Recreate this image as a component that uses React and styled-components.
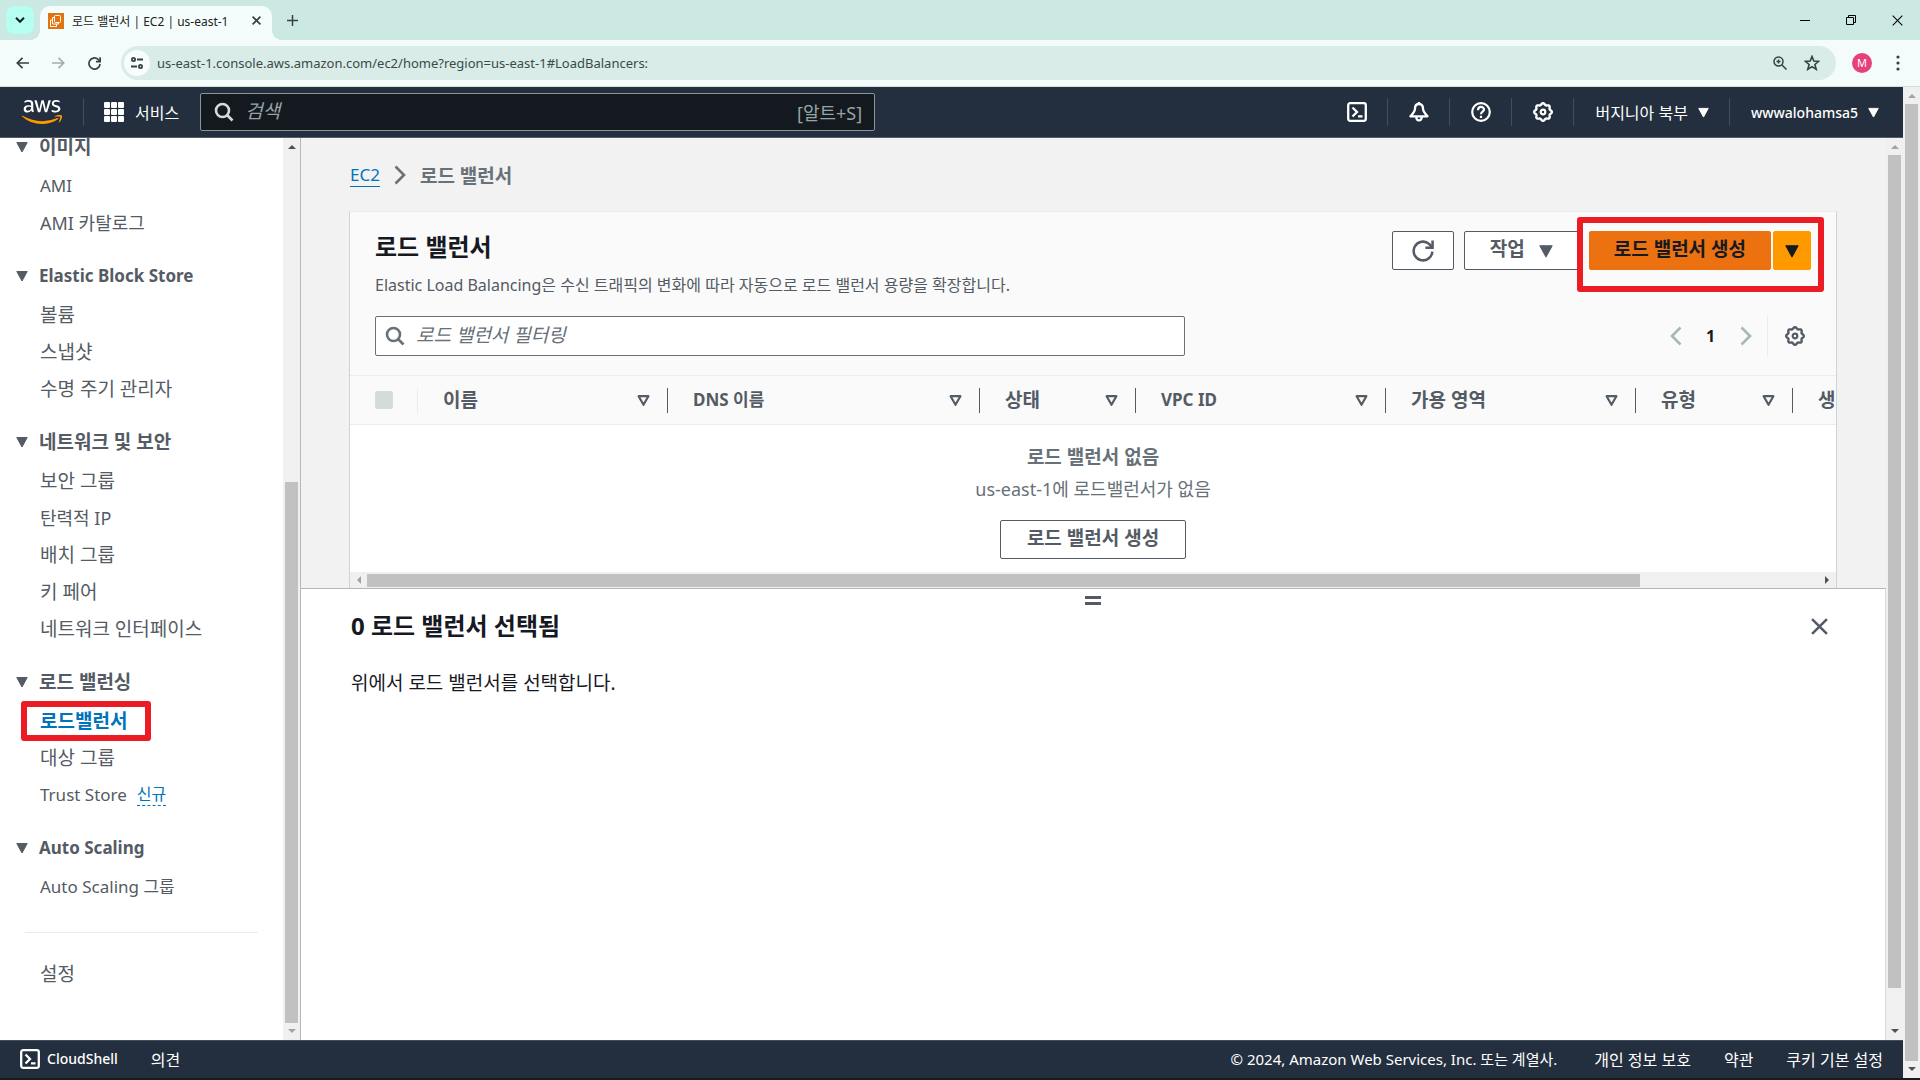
import React from "react";
import styled, { createGlobalStyle, css } from "styled-components";
import { FaAws } from "react-icons/fa";

const sans = `"Noto Sans", "Noto Sans CJK KR", sans-serif`;

const GlobalStyle = createGlobalStyle`
  *, *::before, *::after { box-sizing: border-box; }
  body { margin: 0; font-family: ${sans}; color: #16191f; overflow: hidden; }
  button, input { font-family: inherit; }
  button { cursor: pointer; }
  a { text-decoration: none; }
  svg { display: block; flex: none; }
`;

/* ============== data ============== */

const navGroups = [
  { title: "이미지", items: [{ text: "AMI", size: 17 }, { text: "AMI 카탈로그", size: 18 }] },
  {
    title: "Elastic Block Store",
    size: 17,
    items: [{ text: "볼륨" }, { text: "스냅샷" }, { text: "수명 주기 관리자" }],
  },
  {
    title: "네트워크 및 보안",
    items: [
      { text: "보안 그룹" },
      { text: "탄력적 IP", size: 18 },
      { text: "배치 그룹" },
      { text: "키 페어" },
      { text: "네트워크 인터페이스" },
    ],
  },
  {
    title: "로드 밸런싱",
    items: [
      { text: "로드밸런서", active: true },
      { text: "대상 그룹" },
      { text: "Trust Store", size: 17, badge: "신규" },
    ],
  },
  { title: "Auto Scaling", size: 17, items: [{ text: "Auto Scaling 그룹", size: 17 }] },
];

const columns = [
  { text: "이름", width: 250 },
  { text: "DNS 이름", width: 312, size: 17 },
  { text: "상태", width: 156 },
  { text: "VPC ID", width: 250, size: 17 },
  { text: "가용 영역", width: 250 },
  { text: "유형", width: 157 },
  { text: "생성 날짜", width: 250 },
];

/* ============== icons ============== */

const Caret = ({ size = 12 }) => (
  <svg width={size} height={size} viewBox="0 0 12 12" aria-hidden="true">
    <path d="M.800 1.500h10.400L6 11z" fill="currentColor" stroke="currentColor" strokeLinejoin="round" />
  </svg>
);

const SortCaret = () => (
  <svg width="13" height="13" viewBox="0 0 12 12" aria-hidden="true">
    <path d="M1.500 2h9L6 10z" fill="none" stroke="currentColor" strokeWidth="2" strokeLinejoin="round" />
  </svg>
);

const SearchIcon = ({ size = 20 }) => (
  <svg width={size} height={size} viewBox="0 0 20 20" fill="none" stroke="currentColor" strokeWidth="2.6" aria-hidden="true">
    <circle cx="8.5" cy="8.5" r="6.5" />
    <path d="M13 13l5.5 5.5" />
  </svg>
);

// ring with eight soft teeth
const gearPath = (() => {
  const pts = [];
  for (let i = 0; i < 160; i += 1) {
    const t = (i / 160) * Math.PI * 2;
    const r = 8 + 0.8 * Math.cos(8 * t);
    pts.push(`${(10 + r * Math.cos(t)).toFixed(2)} ${(10 + r * Math.sin(t)).toFixed(2)}`);
  }
  return `M${pts.join("L")}Z`;
})();

const GearIcon = () => (
  <svg width="20" height="20" viewBox="0 0 20 20" fill="none" stroke="currentColor" strokeWidth="2.4" aria-hidden="true">
    <path d={gearPath} />
    <circle cx="10" cy="10" r="2.300" strokeWidth="2.200" />
  </svg>
);

const ShellIcon = () => (
  <svg width="20" height="20" viewBox="0 0 20 20" fill="none" stroke="currentColor" strokeWidth="2.3" aria-hidden="true">
    <rect x="1.200" y="1.200" width="17.600" height="17.600" rx="2" />
    <path d="M5.500 5.500L10 10l-4.500 4.500M11 14.300h4.500" />
  </svg>
);

const BellIcon = () => (
  <svg width="20" height="20" viewBox="0 0 20 20" fill="none" stroke="currentColor" strokeWidth="2.3" strokeLinejoin="round" aria-hidden="true">
    <path d="M10 0v2" />
    <path d="M10 2c-2.800 0-4 2-4 4.500 0 3.200-1.500 4.700-4.500 7.800h17c-3-3.100-4.500-4.600-4.500-7.800C14 4 12.800 2 10 2z" />
    <path d="M7.300 14.500c0 5.200 5.400 5.200 5.400 0" />
  </svg>
);

const HelpIcon = () => (
  <svg width="20" height="20" viewBox="0 0 20 20" fill="none" stroke="currentColor" strokeWidth="2.2" aria-hidden="true">
    <circle cx="10" cy="10" r="8.800" />
    <path d="M7 8.200c0-4.200 6-4.200 6-.700 0 2.200-3 2.200-3 4.700M10 13.700v2.200" />
  </svg>
);

const AppsIcon = () => (
  <svg width="20" height="20" viewBox="0 0 20 20" fill="currentColor" aria-hidden="true">
    {[0, 7, 14].map((y) => [0, 7, 14].map((x) => <rect key={`${x}-${y}`} x={x} y={y} width="6" height="6" rx="1" />))}
  </svg>
);

const Chevron = ({ left, height = 20 }) => (
  <svg width="12" height={height} viewBox="0 0 12 20" fill="none" stroke="currentColor" strokeWidth="2.6" aria-hidden="true">
    <path d={left ? "M10.500 1.500L2 10l8.500 8.500" : "M1.500 1.500L10 10l-8.500 8.500"} />
  </svg>
);

const CloseIcon = ({ size, weight = 2 }) => (
  <svg width={size} height={size} viewBox="0 0 16 16" fill="none" stroke="currentColor" strokeWidth={weight} aria-hidden="true">
    <path d="M1 1l14 14M15 1L1 15" />
  </svg>
);

const RefreshIcon = ({ size = 22, weight = 2.3 }) => (
  <svg width={size} height={size} viewBox="0 0 20 20" fill="none" stroke="currentColor" strokeWidth={weight} aria-hidden="true">
    <path d="M18.500 10.500a8.500 8.500 0 1 1-3-7l2.700 3" />
    <path d="M18.700 .5v6.500h-6.500" />
  </svg>
);

/* ============== browser chrome ============== */

const Screen = styled.div`
  height: 100vh;
  display: flex;
  flex-direction: column;
  background: #202124;
  border-bottom: 2px solid #1b1b1e;
`;

const TabStrip = styled.div`
  height: 40px;
  flex: none;
  display: flex;
  align-items: center;
  padding-left: 6px;
  background: #cce8e2;
`;

const ChromeButton = styled.button`
  display: flex;
  align-items: center;
  justify-content: center;
  width: ${(p) => p.$w || 28}px;
  height: 28px;
  flex: none;
  padding: 0;
  border: 0;
  border-radius: 8px;
  background: ${(p) => p.$bg || "transparent"};
  color: ${(p) => p.$color || "#35423f"};
`;

const Tab = styled.div`
  position: relative;
  align-self: flex-end;
  display: flex;
  align-items: center;
  width: 232px;
  height: 34px;
  margin-left: 6px;
  padding: 0 8px 5px;
  border-radius: 10px 10px 0 0;
  background: #f4fdfb;
  font-size: 12px;
  color: #1c2322;

  &::before, &::after {
    content: "";
    position: absolute;
    bottom: 0;
    width: 10px;
    height: 10px;
  }
  &::before { left: -10px; background: radial-gradient(circle at 0 0, transparent 10px, #f4fdfb 10px); }
  &::after { right: -10px; background: radial-gradient(circle at 100% 0, transparent 10px, #f4fdfb 10px); }

  span { flex: 1; margin-left: 8px; white-space: nowrap; }
`;

const WindowButtons = styled.div`
  display: flex;
  margin-left: auto;
`;

const Toolbar = styled.div`
  height: 47px;
  flex: none;
  display: flex;
  align-items: center;
  gap: 8px;
  padding: 0 8px;
  background: #f3fcfa;
  border-bottom: 1px solid #d5dddd;
`;

const Omnibox = styled.div`
  flex: 1;
  display: flex;
  align-items: center;
  gap: 4px;
  height: 34px;
  padding: 0 10px 0 4px;
  margin: 0 0 0 5px;
  border-radius: 17px;
  background: #d9ece8;
`;

const SiteInfo = styled.button`
  display: flex;
  align-items: center;
  justify-content: center;
  width: 26px;
  height: 26px;
  flex: none;
  margin-left: -1px;
  padding: 0;
  border: 0;
  border-radius: 50%;
  background: #f6fdfc;
  color: #35423f;
`;

const Url = styled.input`
  flex: 1;
  min-width: 0;
  padding: 0 0 0 3px;
  border: 0;
  outline: 0;
  background: transparent;
  color: #3c4a48;
  font-size: 13px;
`;

const Avatar = styled.button`
  width: 20px;
  height: 20px;
  flex: none;
  margin: 0 4px 0 8px;
  padding: 0;
  border: 0;
  border-radius: 50%;
  background: #e8407a;
  color: #fff;
  font-size: 11px;
  line-height: 20px;
`;

function BrowserChrome() {
  return (
    <>
      <TabStrip>
        <ChromeButton $bg="#b5fef0" $color="#10201d" aria-label="탭 검색">
          <svg width="10" height="6" viewBox="0 0 10 6" fill="none" stroke="currentColor" strokeWidth="2">
            <path d="M1 .800l4 4 4-4" />
          </svg>
        </ChromeButton>
        <Tab>
          <svg width="16" height="16" viewBox="0 0 16 16" fill="none" stroke="#fff">
            <rect width="16" height="16" fill="#e2730f" stroke="none" />
            <rect x="6.500" y="2.500" width="6" height="7" rx="1" />
            <path d="M6.500 4.500h-2v6.500h6v-1.500M4.500 7H2.500v6.500h6V11" />
          </svg>
          <span>로드 밸런서 | EC2 | us-east-1</span>
          <ChromeButton $w={16} aria-label="탭 닫기"><CloseIcon size={9} weight={3} /></ChromeButton>
        </Tab>
        <ChromeButton $w={40} aria-label="새 탭">
          <svg width="11" height="11" viewBox="0 0 11 11" stroke="currentColor" strokeWidth="1.500">
            <path d="M5.500 0v11M0 5.500h11" />
          </svg>
        </ChromeButton>
        <WindowButtons>
          <ChromeButton $w={46} $color="#000" aria-label="최소화">
            <svg width="10" height="10" viewBox="0 0 10 10" stroke="currentColor"><path d="M0 5.500h10" /></svg>
          </ChromeButton>
          <ChromeButton $w={46} $color="#000" aria-label="이전 크기로 복원">
            <svg width="10" height="10" viewBox="0 0 10 10" fill="none" stroke="currentColor">
              <path d="M.5 2.500h7v7h-7zM2.500 2.500v-2h7v7h-2" />
            </svg>
          </ChromeButton>
          <ChromeButton $w={46} $color="#000" aria-label="닫기"><CloseIcon size={11} weight={1.5} /></ChromeButton>
        </WindowButtons>
      </TabStrip>
      <Toolbar>
        <ChromeButton aria-label="뒤로">
          <svg width="13" height="12" viewBox="0 0 13 12" fill="none" stroke="currentColor" strokeWidth="1.700">
            <path d="M13 6H1.500M6.500 .800L1.300 6l5.200 5.200" />
          </svg>
        </ChromeButton>
        <ChromeButton $color="#a4adab" aria-label="앞으로">
          <svg width="13" height="12" viewBox="0 0 13 12" fill="none" stroke="currentColor" strokeWidth="1.700">
            <path d="M0 6h11.500M6.500 .800L11.700 6l-5.200 5.200" />
          </svg>
        </ChromeButton>
        <ChromeButton aria-label="새로고침"><RefreshIcon size={13} weight={2.6} /></ChromeButton>
        <Omnibox>
          <SiteInfo aria-label="사이트 정보 보기">
            <svg width="12" height="12" viewBox="0 0 12 12" fill="none" stroke="currentColor" strokeWidth="1.800">
              <circle cx="2.500" cy="2.500" r="1.600" />
              <path d="M6 2.500h6M0 9.500h6" />
              <circle cx="9.500" cy="9.500" r="1.600" />
            </svg>
          </SiteInfo>
          <Url
            type="text"
            aria-label="주소창"
            defaultValue="us-east-1.console.aws.amazon.com/ec2/home?region=us-east-1#LoadBalancers:"
          />
          <ChromeButton aria-label="확대/축소">
            <svg width="14" height="14" viewBox="0 0 14 14" fill="none" stroke="currentColor" strokeWidth="1.500">
              <circle cx="5.500" cy="5.500" r="4.500" />
              <path d="M9 9l4.500 4.500M3.500 5.500h4M5.500 3.500v4" />
            </svg>
          </ChromeButton>
          <ChromeButton aria-label="북마크">
            <svg width="16" height="16" viewBox="0 0 16 16" fill="none" stroke="currentColor" strokeWidth="1.600">
              <path d="M8 1.500l1.800 4.600 4.900.300-3.800 3.100 1.300 4.800L8 11.600l-4.200 2.700 1.300-4.800L1.300 6.400l4.900-.300z" />
            </svg>
          </ChromeButton>
        </Omnibox>
        <Avatar aria-label="프로필">M</Avatar>
        <ChromeButton aria-label="메뉴">
          <svg width="4" height="16" viewBox="0 0 4 16" fill="currentColor">
            <circle cx="2" cy="2" r="1.600" />
            <circle cx="2" cy="8" r="1.600" />
            <circle cx="2" cy="14" r="1.600" />
          </svg>
        </ChromeButton>
      </Toolbar>
    </>
  );
}

/* ============== scroll bars ============== */

const Track = styled.div`
  flex: none;
  display: flex;
  flex-direction: ${(p) => (p.$horizontal ? "row" : "column")};
  align-items: center;
  background: #f0f0f0;
  color: #505050;
  ${(p) => (p.$horizontal ? "height: 16px;" : "width: 17px;")}

  svg { margin: ${(p) => (p.$horizontal ? "0 6px" : "6px 0")}; }
`;

const Thumb = styled.div`
  flex: ${(p) => p.$grow};
  background: #c1c1c1;
  ${(p) => (p.$horizontal ? "height: 13px;" : "width: 13px;")}
`;

const Rest = styled.div`
  flex: ${(p) => p.$grow};
`;

const arrows = { up: "M0 5l4-4 4 4z", down: "M0 0l4 4 4-4z", left: "M5 0L1 4l4 4z", right: "M0 0l4 4-4 4z" };

const Arrow = ({ dir, dim }) => {
  const vertical = dir === "up" || dir === "down";
  return (
    <svg width={vertical ? 8 : 5} height={vertical ? 5 : 8} fill={dim ? "#a3a3a3" : "currentColor"} aria-hidden="true">
      <path d={arrows[dir]} />
    </svg>
  );
};

function ScrollBar({ horizontal, before, thumb, after, dimStart, dimEnd }) {
  return (
    <Track $horizontal={horizontal}>
      <Arrow dir={horizontal ? "left" : "up"} dim={dimStart} />
      <Rest $grow={before} />
      <Thumb $horizontal={horizontal} $grow={thumb} />
      <Rest $grow={after} />
      <Arrow dir={horizontal ? "right" : "down"} dim={dimEnd} />
    </Track>
  );
}

/* ============== console header ============== */

const Viewport = styled.div`
  flex: 1;
  min-height: 0;
  display: flex;
`;

const Console = styled.div`
  flex: 1;
  min-width: 0;
  display: flex;
  flex-direction: column;
`;

const Header = styled.header`
  height: 51px;
  flex: none;
  display: flex;
  align-items: center;
  background: #232f3e;
  border-bottom: 1px solid #545b64;
  color: #fff;
`;

const Logo = styled.a`
  display: flex;
  align-items: center;
  width: 84px;
  height: 28px;
  padding-left: 22px;
  border-right: 1px solid #414d5c;

  path { fill: url(#aws-logo); }
`;

const Services = styled.button`
  display: flex;
  align-items: center;
  gap: 11px;
  padding: 0 21px 0 20px;
  border: 0;
  background: transparent;
  color: #fff;
  font-size: 16px;
`;

const HeaderSearch = styled.label`
  display: flex;
  align-items: center;
  gap: 10px;
  width: 675px;
  height: 38px;
  padding: 0 12px 0 13px;
  border: 1px solid #879596;
  border-radius: 2px;
  background: #14191f;
  color: #d5dbdb;

  input {
    flex: 1;
    min-width: 0;
    padding: 0 0 2px 1px;
    border: 0;
    outline: 0;
    background: transparent;
    color: #fff;
    font-size: 19px;
  }
  input::placeholder { color: #95a5a6; font-style: italic; opacity: 1; }
  kbd { font-family: inherit; font-size: 18px; color: #95a5a6; }
`;

const HeaderItems = styled.div`
  display: flex;
  margin-left: auto;
  padding-right: 4px;
`;

const HeaderItem = styled.button`
  display: flex;
  align-items: center;
  justify-content: center;
  gap: 10px;
  height: 28px;
  padding: 0 20px 0 21px;
  border: 0;
  background: transparent;
  color: #fff;
  font-size: ${(p) => p.$size || 16}px;
  font-weight: ${(p) => (p.$medium ? 500 : 400)};

  & + & { border-left: 1px solid #414d5c; }
`;

function ConsoleHeader() {
  return (
    <Header>
      <Logo href="#home" aria-label="aws">
        <svg width="0" height="0" aria-hidden="true">
          <linearGradient id="aws-logo" x1="0" y1="0" x2="0" y2="1">
            <stop offset="0.62" stopColor="#fff" />
            <stop offset="0.62" stopColor="#ff9900" />
          </linearGradient>
        </svg>
        <FaAws size={40} />
      </Logo>
      <Services>
        <AppsIcon />
        서비스
      </Services>
      <HeaderSearch>
        <SearchIcon />
        <input type="text" aria-label="검색" placeholder="검색" />
        <kbd>[알트+S]</kbd>
      </HeaderSearch>
      <HeaderItems>
        <HeaderItem aria-label="CloudShell"><ShellIcon /></HeaderItem>
        <HeaderItem aria-label="알림"><BellIcon /></HeaderItem>
        <HeaderItem aria-label="지원"><HelpIcon /></HeaderItem>
        <HeaderItem aria-label="설정"><GearIcon /></HeaderItem>
        <HeaderItem>버지니아 북부 <Caret size={11} /></HeaderItem>
        <HeaderItem $size={14} $medium>wwwalohamsa5 <Caret size={11} /></HeaderItem>
      </HeaderItems>
    </Header>
  );
}

/* ============== side navigation ============== */

const Body = styled.div`
  flex: 1;
  min-height: 0;
  display: flex;
`;

const Sidebar = styled.aside`
  flex: none;
  display: flex;
  width: 301px;
  background: #fff;
  border-right: 1px solid #b5b8b8;
`;

const NavScroll = styled.nav`
  flex: 1;
  overflow: hidden;

  > div:first-child { margin-top: -11px; }
`;

const NavGroup = styled.div`
  margin-bottom: 15px;
`;

const NavTitle = styled.button`
  display: flex;
  align-items: center;
  gap: 11px;
  height: 40px;
  padding: 0 0 0 16px;
  border: 0;
  background: transparent;
  color: #545b64;
  font-size: ${(p) => p.$size || 19}px;
  font-weight: 700;
  line-height: 24px;
`;

const NavList = styled.ul`
  margin: 0;
  padding: 0;
  list-style: none;
`;

const NavItem = styled.li`
  position: relative;
  display: flex;
  align-items: center;
  gap: 10px;
  height: 37px;
  padding-left: 40px;
  line-height: 24px;
`;

const NavLink = styled.a`
  color: ${(p) => (p.$active ? "#0073bb" : "#545b64")};
  font-size: ${(p) => p.$size || 19}px;
  font-weight: ${(p) => (p.$active ? 700 : 400)};
`;

const NewBadge = styled.a`
  color: #0073bb;
  font-size: 16px;
  line-height: 22px;
  border-bottom: 1px dashed #0073bb;
`;

const Divider = styled.hr`
  margin: 27px 25px 22px;
  border: 0;
  border-top: 1px solid #eaeded;
`;

// red frame drawn over the element it calls out
const Highlight = styled.div`
  position: absolute;
  border: 6px solid #ec1c24;
  border-radius: 3px;
  pointer-events: none;
  ${(p) =>
    p.$nav
      ? css`top: -1px; left: 21px; width: 130px; height: 40px;`
      : css`inset: -14px -13px -22px -12px;`}
`;

function SideNav() {
  return (
    <Sidebar>
      <NavScroll>
        {navGroups.map((group) => (
          <NavGroup key={group.title}>
            <NavTitle $size={group.size} aria-expanded="true">
              <Caret />
              {group.title}
            </NavTitle>
            <NavList>
              {group.items.map((item) => (
                <NavItem key={item.text}>
                  <NavLink href="#nav" $size={item.size} $active={item.active}>{item.text}</NavLink>
                  {item.badge && <NewBadge href="#new">{item.badge}</NewBadge>}
                  {item.active && <Highlight $nav />}
                </NavItem>
              ))}
            </NavList>
          </NavGroup>
        ))}
        <Divider />
        <NavList>
          <NavItem><NavLink href="#settings">설정</NavLink></NavItem>
        </NavList>
      </NavScroll>
      <ScrollBar before={327} thumb={541} after={0} dimEnd />
    </Sidebar>
  );
}

/* ============== load balancer list ============== */

const Main = styled.main`
  flex: 1;
  min-width: 0;
  display: flex;
  flex-direction: column;
  background: #f2f2f2;
`;

const Listing = styled.section`
  height: 450px;
  flex: none;
  display: flex;
  flex-direction: column;
  padding: 20px 49px 0 48px;
  overflow: hidden;
`;

const Breadcrumb = styled.nav`
  display: flex;
  align-items: center;
  gap: 14px;
  height: 34px;
  margin-bottom: 19px;
  padding-left: 1px;
  color: #687078;
  font-size: 19px;
  font-weight: 700;

  a {
    color: #0073bb;
    font-size: 17px;
    font-weight: 400;
    line-height: 22px;
    border-bottom: 1px solid #0073bb;
  }
`;

const Card = styled.div`
  flex: 1;
  display: flex;
  flex-direction: column;
  background: #fff;
  border: 1px solid #d0d3d3;
  border-top-color: #eaeded;
  border-bottom: 0;
`;

const CardHead = styled.div`
  padding: 19px 25px;
  background: #fafafa;
`;

const Row = styled.div`
  display: flex;
  align-items: flex-start;
  justify-content: space-between;
`;

const Title = styled.h1`
  margin: 0;
  font-size: 24px;
  line-height: 32px;
`;

const Lead = styled.p`
  margin: 10px 0 19px;
  color: #545b64;
  font-size: 16px;
  line-height: 24px;
`;

const Actions = styled.div`
  display: flex;
  gap: 10px;
`;

const Button = styled.button`
  display: flex;
  align-items: center;
  justify-content: center;
  gap: 14px;
  height: 39px;
  padding: 0 ${(p) => p.$pad || 26}px;
  border: 1px solid #545b64;
  border-radius: 2px;
  background: #fff;
  color: #545b64;
  font-size: 19px;
  font-weight: 700;
  line-height: 24px;

  span { padding-bottom: 3px; }

  ${(p) => p.$primary && css`
    border-color: #ec7211;
    background: #ec7211;
    color: #16191f;
  `}
  ${(p) => p.$split && css`
    border-color: #ff9900;
    background: #ff9900;
    color: #16191f;
  `}
`;

const SplitButton = styled.div`
  position: relative;
  display: flex;
  gap: 2px;
`;

const Filter = styled.label`
  display: flex;
  align-items: center;
  gap: 11px;
  flex: 1;
  max-width: 810px;
  height: 40px;
  padding: 0 10px 0 9px;
  border: 1px solid #687078;
  border-radius: 2px;
  background: #fff;
  color: #687078;

  input {
    flex: 1;
    min-width: 0;
    padding: 0 0 2px;
    border: 0;
    outline: 0;
    background: transparent;
    font-size: 19px;
  }
  input::placeholder { color: #687078; font-style: italic; opacity: 1; }
`;

const Pager = styled.div`
  display: flex;
  align-items: center;
  height: 40px;
`;

const PagerButton = styled.button`
  display: flex;
  align-items: center;
  justify-content: center;
  width: 35px;
  height: 40px;
  padding: 0;
  border: 0;
  background: transparent;
  color: ${(p) => (p.disabled ? "#aab7b8" : p.$page ? "#16191f" : "#545b64")};
  font-size: 16px;
  font-weight: 700;
`;

const Preferences = styled.div`
  margin-left: 4px;
  margin-right: -1px;
  padding-left: 9px;
  border-left: 1px solid #eaeded;
`;

const TableClip = styled.div`
  overflow: hidden;
`;

const Table = styled.table`
  width: 1693px;
  table-layout: fixed;
  border-collapse: collapse;
`;

const Th = styled.th`
  height: 49px;
  padding: 0;
  background: #fafafa;
  border-top: 1px solid #eaeded;
  border-bottom: 1px solid #eaeded;
  text-align: left;
`;

const HeadCell = styled.div`
  display: flex;
  align-items: center;
  justify-content: space-between;
  height: 25px;
  padding: 0 17px 0 25px;
  border-right: 1px solid ${(p) => (p.$faint ? "#eaeded" : "#545b64")};
  color: #545b64;
  font-size: ${(p) => p.$size || 19}px;
  line-height: 24px;
`;

const Checkbox = styled.input`
  appearance: none;
  width: 18px;
  height: 18px;
  margin: 0;
  border-radius: 2px;
  background: #d5dbdb;
`;

const Empty = styled.div`
  flex: 1;
  display: flex;
  flex-direction: column;
  align-items: center;
  padding-top: 16px;
  color: #687078;
  font-size: 19px;
  line-height: 32px;

  p { margin: 0 0 15px; font-size: 18px; }
`;

function LoadBalancers() {
  return (
    <Listing>
      <Breadcrumb aria-label="breadcrumb">
        <a href="#ec2">EC2</a>
        <Chevron height={20} />
        <span>로드 밸런서</span>
      </Breadcrumb>
      <Card>
        <CardHead>
          <Row>
            <div>
              <Title>로드 밸런서</Title>
              <Lead>Elastic Load Balancing은 수신 트래픽의 변화에 따라 자동으로 로드 밸런서 용량을 확장합니다.</Lead>
            </div>
            <Actions>
              <Button $pad={19} aria-label="새로 고침"><RefreshIcon /></Button>
              <Button $pad={25}><span>작업</span> <Caret size={14} /></Button>
              <SplitButton>
                <Button $primary $pad={24}><span>로드 밸런서 생성</span></Button>
                <Button $split $pad={11} aria-label="추가 생성 옵션"><Caret size={14} /></Button>
                <Highlight />
              </SplitButton>
            </Actions>
          </Row>
          <Row>
            <Filter>
              <SearchIcon size={20} />
              <input type="text" aria-label="로드 밸런서 필터링" placeholder="로드 밸런서 필터링" />
            </Filter>
            <Pager>
              <PagerButton disabled aria-label="이전 페이지"><Chevron left /></PagerButton>
              <PagerButton $page>1</PagerButton>
              <PagerButton disabled aria-label="다음 페이지"><Chevron /></PagerButton>
              <Preferences>
                <PagerButton aria-label="기본 설정"><GearIcon /></PagerButton>
              </Preferences>
            </Pager>
          </Row>
        </CardHead>
        <TableClip>
          <Table>
            <colgroup>
              <col width="68" />
              {columns.map((col) => <col key={col.text} width={col.width} />)}
            </colgroup>
            <thead>
              <tr>
                <Th>
                  <HeadCell $faint>
                    <Checkbox type="checkbox" disabled aria-label="모두 선택" />
                  </HeadCell>
                </Th>
                {columns.map((col) => (
                  <Th key={col.text} scope="col">
                    <HeadCell $size={col.size}>{col.text}<SortCaret /></HeadCell>
                  </Th>
                ))}
              </tr>
            </thead>
          </Table>
        </TableClip>
        <Empty>
          <strong>로드 밸런서 없음</strong>
          <p>us-east-1에 로드밸런서가 없음</p>
          <Button><span>로드 밸런서 생성</span></Button>
        </Empty>
        <ScrollBar horizontal before={0} thumb={1274} after={179} dimStart />
      </Card>
    </Listing>
  );
}

/* ============== split panel ============== */

const Panel = styled.section`
  position: relative;
  flex: 1;
  padding: 19px 57px 0 50px;
  background: #fff;
  border-top: 1px solid #b5b8b8;
  border-right: 1px solid #d5dbdb;

  h2 { margin: 0; font-size: 24px; line-height: 36px; }
  p { margin: 22px 0 0; font-size: 19px; line-height: 32px; }
`;

const Handle = styled.button`
  position: absolute;
  top: 7px;
  left: 50%;
  width: 16px;
  height: 9px;
  margin-left: -8px;
  padding: 0;
  border: solid #545b64;
  border-width: 3px 0;
  background: transparent;
`;

const IconButton = styled.button`
  padding: 10px 0;
  border: 0;
  background: transparent;
  color: #545b64;
`;

/* ============== footer ============== */

const Footer = styled.footer`
  height: 38px;
  flex: none;
  display: flex;
  align-items: center;
  gap: 33px;
  padding: 0 20px 2px;
  background: #232f3e;
  border-top: 1px solid #414d5c;
  color: #fff;
  font-size: 15px;

  a {
    display: flex;
    align-items: center;
    gap: 7px;
    color: #fff;
    font-size: 16px;
  }
  a:first-child { font-size: 14px; font-weight: 500; }
  > span { margin-left: auto; margin-right: 4px; }
`;

export default function App() {
  return (
    <Screen>
      <GlobalStyle />
      <BrowserChrome />
      <Viewport>
        <Console>
          <ConsoleHeader />
          <Body>
            <SideNav />
            <Main>
              <LoadBalancers />
              <Panel>
                <Handle aria-label="패널 크기 조정" />
                <Row>
                  <h2>0 로드 밸런서 선택됨</h2>
                  <IconButton aria-label="패널 닫기"><CloseIcon size={17} weight={2.4} /></IconButton>
                </Row>
                <p>위에서 로드 밸런서를 선택합니다.</p>
              </Panel>
            </Main>
            <ScrollBar before={0} thumb={833} after={35} dimStart />
          </Body>
          <Footer>
            <a href="#cloudshell"><ShellIcon />CloudShell</a>
            <a href="#feedback">의견</a>
            <span>© 2024, Amazon Web Services, Inc. 또는 계열사.</span>
            <a href="#privacy">개인 정보 보호</a>
            <a href="#terms">약관</a>
            <a href="#cookies">쿠키 기본 설정</a>
          </Footer>
        </Console>
        <ScrollBar before={0} thumb={956} after={0} dimStart />
      </Viewport>
    </Screen>
  );
}
